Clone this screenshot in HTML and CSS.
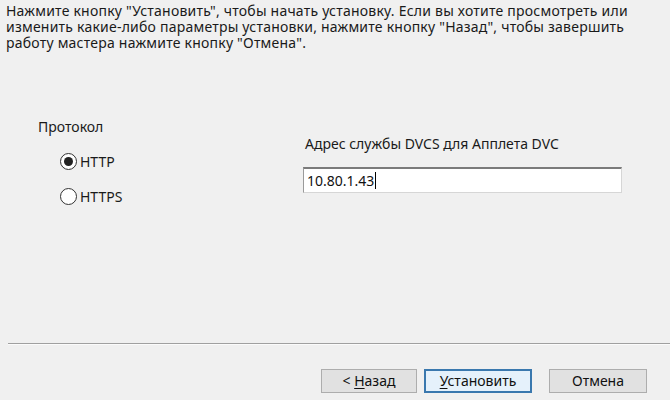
FILE: index.html
```html
<!DOCTYPE html>
<html lang="ru">
<head>
<meta charset="utf-8">
<title>Установка</title>
<link rel="stylesheet" href="styles.css">
</head>
<body>
<div class="page">
  <div class="content">
    <p class="intro">Нажмите кнопку "Установить", чтобы начать установку. Если вы хотите просмотреть или изменить какие-либо параметры установки, нажмите кнопку "Назад", чтобы завершить работу мастера нажмите кнопку "Отмена".</p>
    <div class="options">
      <div class="protocol">
        <div class="group-label">Протокол</div>
        <div class="radios">
          <label class="radio-row"><span class="radio checked"></span><span>HTTP</span></label>
          <label class="radio-row"><span class="radio"></span><span>HTTPS</span></label>
        </div>
      </div>
      <div class="address">
        <div class="field-label">Адрес службы DVCS для Апплета DVC</div>
        <div class="textbox"><span>10.80.1.43</span><span class="caret"></span></div>
      </div>
    </div>
  </div>
  <div class="footer">
    <div class="separator"></div>
    <div class="buttons">
      <button class="btn btn-back">&lt; <u>Н</u>азад</button>
      <button class="btn btn-install"><u>У</u>становить</button>
      <button class="btn btn-cancel">Отмена</button>
    </div>
  </div>
</div>
</body>
</html>
```

FILE: styles.css
```css
* { box-sizing: border-box; }
html, body { margin: 0; padding: 0; }
body {
  background: #f0f0f0;
  font-family: "Noto Sans", "Open Sans", sans-serif;
  font-size: 14px;
  color: #1a1a1a;
}
.page {
  width: 670px;
  height: 400px;
  display: flex;
  flex-direction: column;
  overflow: hidden;
}
.content { flex: 1; }
.intro {
  margin: 0;
  padding: 3px 20px 0 6px;
  line-height: 16px;
  letter-spacing: 0.22px;
}
.options {
  display: flex;
  margin-top: 68px;
}
.protocol {
  width: 303px;
  padding-left: 38px;
}
.group-label { line-height: 16px; }
.radios {
  display: flex;
  flex-direction: column;
  gap: 18px;
  padding-left: 22px;
  margin-top: 18px;
}
.radio-row {
  display: flex;
  align-items: center;
  gap: 3px;
  height: 17px;
  line-height: 17px;
}
.radio {
  width: 17px;
  height: 17px;
  border: 1px solid #333;
  border-radius: 50%;
  background: #fff;
  display: flex;
  align-items: center;
  justify-content: center;
}
.radio.checked::after {
  content: "";
  width: 9px;
  height: 9px;
  border-radius: 50%;
  background: #222;
}
.address {
  padding-top: 17px;
  padding-left: 2px;
}
.field-label { line-height: 16px; }
.textbox {
  margin-top: 15px;
  margin-left: -2px;
  width: 319px;
  height: 26px;
  background: #fff;
  border-top: 2px solid #7b7b7b;
  border-left: 1px solid #9a9a9a;
  border-right: 1px solid #d6d6d6;
  border-bottom: 1px solid #d6d6d6;
  display: flex;
  align-items: center;
  padding-left: 3px;
  color: #111;
}
.caret {
  width: 1px;
  height: 17px;
  background: #000;
  margin-left: 1px;
}
.separator {
  margin-left: 8px;
  border-top: 1px solid #a0a0a0;
  border-bottom: 1px solid #fbfbfb;
}
.buttons {
  display: flex;
  justify-content: flex-end;
  padding: 24px 23px 7px 0;
}
.btn {
  height: 24px;
  font-family: inherit;
  font-size: 14px;
  color: #111;
  background: #e1e1e1;
  border: 1px solid #adadad;
  padding: 0;
  line-height: 20px;
}
.btn u { text-decoration-thickness: 1px; text-underline-offset: 2px; }
.btn-back { width: 96px; }
.btn-install {
  width: 108px;
  margin-left: 7px;
  background: #e5f1fb;
  border: 2px solid #3a78ae;
}
.btn-cancel {
  width: 98px;
  margin-left: 17px;
}
```
